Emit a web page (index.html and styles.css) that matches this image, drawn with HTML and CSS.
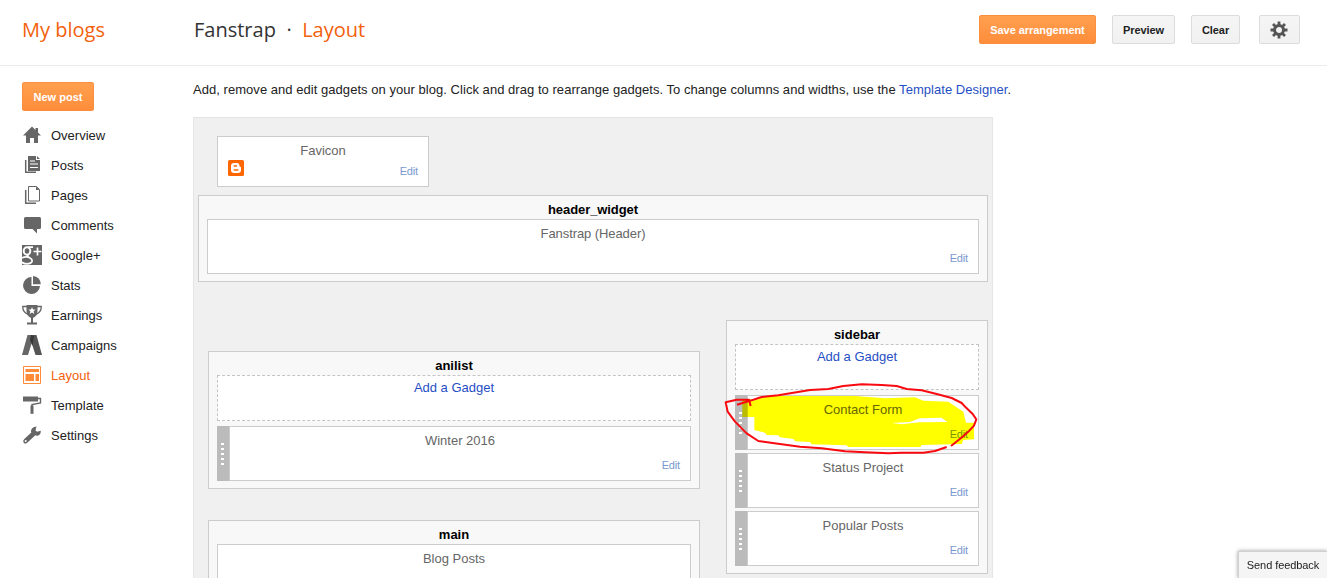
FILE: index.html
```html
<!DOCTYPE html>
<html lang="en">
<head>
<meta charset="utf-8">
<title>Fanstrap - Layout</title>
<link rel="stylesheet" href="styles.css">
</head>
<body>
<header class="topbar">
  <a class="brand">My blogs</a>
  <h1 class="crumbs"><span class="blog">Fanstrap</span><span class="dot">·</span><span class="page">Layout</span></h1>
  <div class="actions">
    <button class="btn primary save">Save arrangement</button>
    <button class="btn preview">Preview</button>
    <button class="btn clear">Clear</button>
    <button class="btn gear" aria-label="Options">
      <svg width="18" height="18" viewBox="0 0 18 18"><g stroke="#555" stroke-width="2.800"><path d="M9 .5v17M.5 9h17M3 3l12 12M15 3L3 15"/></g><circle cx="9" cy="9" r="4.500" fill="#f2f2f2" stroke="#555" stroke-width="3"/></svg>
    </button>
  </div>
</header>
<div class="columns">
  <nav class="side">
    <button class="btn primary newpost">New post</button>
    <ul class="menu">
      <li><svg class="ico" viewBox="0 0 20 20"><path d="M10 1.500L1 10.500h3V18h4v-5h4v5h4v-7.500h3l-3-3V3h-2.500v2z"/></svg><span>Overview</span></li>
      <li><svg class="ico" viewBox="0 0 20 20"><path d="M6 1h8v4h4v11H6zM15 1l3 3h-3z"/><path d="M3.700 5v12.300H14" fill="none" stroke="#666" stroke-width="1.500"/><path d="M8 6h5M8 9h8M8 12.500h8" fill="none" stroke="#fff" stroke-width="1.100"/></svg><span>Posts</span></li>
      <li><svg class="ico" viewBox="0 0 20 20"><path d="M6.500 1.500h8l3 3v11.500h-11z" fill="#fff" stroke="#666"/><path d="M14 1.500l3.500 3.500H14z"/><path d="M3.700 5v13.300H14" fill="none" stroke="#666" stroke-width="1.500"/></svg><span>Pages</span></li>
      <li><svg class="ico" viewBox="0 0 20 20"><path d="M3.500 2h14q1.500 0 1.500 1.500v9q0 1.500-1.500 1.500H15v4.500L10.500 14h-7Q2 14 2 12.500v-9Q2 2 3.500 2z"/></svg><span>Comments</span></li>
      <li><svg class="ico" viewBox="0 0 20 20"><path d="M0 0h20v20H0z"/><g fill="none" stroke="#fff"><ellipse cx="5" cy="6" rx="3.300" ry="3.800" stroke-width="2"/><path d="M6 2.200h5M5.500 10q0 2 2.500 3t2 3.500q-1 2.300-5 2.300T0 17m0-4q2-1.500 6-1" stroke-width="1.800"/><path d="M15.500 2.500v8M11.500 6.500h8" stroke-width="1.700"/></g></svg><span>Google+</span></li>
      <li><svg class="ico" viewBox="0 0 20 20"><path d="M9.500 2A8.500 8.500 0 1 0 18 11H9.500z"/><path d="M11 1a8 8 0 0 1 7.800 8.300H11z"/></svg><span>Stats</span></li>
      <li><svg class="ico" viewBox="0 0 20 20"><path d="M4.500 0h11v6q0 5-4.500 7v4.500h4V19.500h-10v-2H9V13Q4.500 11 4.500 6z"/><path d="M5 1.500H.7Q.7 8 7 9.500M15 1.500h4.300Q19.300 8 13 9.500" fill="none" stroke="#666" stroke-width="1.300"/><path d="M10 2l1 2.500 2.600.1-2 1.700.7 2.600L10 7.500 7.700 8.900l.7-2.600-2-1.700L9 4.500z" fill="#fff"/></svg><span>Earnings</span></li>
      <li><svg class="ico" viewBox="0 0 20 20"><path d="M5.500 0h5l.5 4-5 16H0z"/><path d="M9 0h5.500L20 20h-6.500L9 6z" fill="#555"/><path d="M9 0l3 1-1.500 10L8 5z" fill="#383838"/></svg><span>Campaigns</span></li>
      <li class="current"><svg class="ico" viewBox="0 0 20 20"><path d="M1.500 1.500h17v17h-17z" fill="none" stroke="#ff8b38"/><g fill="#ff8b38"><path d="M3.500 4H17v3H3.500zM3.500 9H12v7H3.500zM13.500 9H17v7h-3.500z"/></g></svg><span>Layout</span></li>
      <li><svg class="ico" viewBox="0 0 20 20"><path d="M1 1.500h15v5H1z"/><path d="M16 3.500h2.500V8L10 9.500V12" fill="none" stroke="#666" stroke-width="1.400"/><path d="M8.500 10.500h3v8.300h-3z"/></svg><span>Template</span></li>
      <li><svg class="ico" viewBox="0 0 20 20"><path d="M14.500 1.500l-1 3.800 1.500 1.500 3.800-1q.2 3.500-2.500 4.600-1.500.5-3-.1l-7.500 7q-2 2-4 .6-1.500-2 .5-3.800l7-6.500q-.7-2 .6-4Q12 1.500 14.500 1.500z"/><circle cx="3.700" cy="16" r="1" fill="#fff"/></svg><span>Settings</span></li>
    </ul>
  </nav>
  <main class="content">
    <p class="intro">Add, remove and edit gadgets on your blog. Click and drag to rearrange gadgets. To change columns and widths, use the <a>Template Designer</a>.</p>
    <div class="canvas">
      <div class="box favicon">
        <span class="title">Favicon</span>
        <svg class="blogger" width="16" height="16" viewBox="0 0 16 16"><rect width="16" height="16" rx="1.500" fill="#f60"/><path d="M6 3h3q2.500 0 2.500 3 0 .8.700.8.800 0 .8.700V10q0 3-3 3H6q-3 0-3-3V6q0-3 3-3z" fill="#fff"/><path d="M6.200 6h2.300M6.200 10h3.800" stroke="#f60" stroke-width="1.300" stroke-linecap="round"/></svg>
        <a class="edit">Edit</a>
      </div>
      <section class="section head">
        <h2>header_widget</h2>
        <div class="box"><span class="title">Fanstrap (Header)</span><a class="edit">Edit</a></div>
      </section>
      <div class="split">
        <div class="left">
          <section class="section">
            <h2>anilist</h2>
            <div class="add"><a>Add a Gadget</a></div>
            <div class="gadget"><i class="handle"><b></b></i><div class="box"><span class="title">Winter 2016</span><a class="edit">Edit</a></div></div>
          </section>
          <section class="section cut">
            <h2>main</h2>
            <div class="box"><span class="title">Blog Posts</span></div>
          </section>
        </div>
        <section class="section right">
          <h2>sidebar</h2>
          <div class="add"><a>Add a Gadget</a></div>
          <div class="gadget marked"><i class="handle"><b></b></i><div class="box"><span class="title">Contact Form</span><a class="edit">Edit</a></div>
            <svg class="marker" width="290" height="150" viewBox="0 0 870 450"><path fill="#ff0" d="M82 268H132V263L147 264V258H420L510 265 600 262 625 272 700 275 745 305 753 338H777V388L745 390 740 402 620 405 616 411H400L395 406 290 403 285 396 240 394 236 387 195 382 190 376 155 375 150 368 118 360V321H82z"/><path fill="#fff" d="M614 325L680 323 697 336 614 337 560 343 530 339 585 336z"/></svg>
            <svg class="pen" width="290" height="150" viewBox="0 0 870 450"><path d="M66 284L100 274 140 261 190 256 285 240 340 237 385 228 440 223 500 225 545 228 575 237 620 241 665 252 710 264 740 279 752 292 773 312 784 328 777 347 762 363 742 381 708 408M695 411L660 423 625 428H560L520 430 450 427 390 424 320 415 255 410 200 403 130 393 95 370 60 335 38 305 32 277 65 269H102L107 288" fill="none" stroke="#f80a10" stroke-width="6" stroke-linejoin="round"/></svg>
          </div>
          <div class="gadget"><i class="handle"><b></b></i><div class="box"><span class="title">Status Project</span><a class="edit">Edit</a></div></div>
          <div class="gadget"><i class="handle"><b></b></i><div class="box"><span class="title">Popular Posts</span><a class="edit">Edit</a></div></div>
        </section>
      </div>
    </div>
  </main>
</div>
<button class="feedback">Send feedback</button>
</body>
</html>
```
FILE: styles.css
```css
* { box-sizing: border-box; }
body { display: flex; flex-direction: column; height: 100vh; margin: 0; overflow: hidden; background: #fff; color: #222; font: 13px/16px "Liberation Sans", Arial, sans-serif; }
h1, h2, p, ul { margin: 0; padding: 0; }
a { color: #1f4fc4; }
.topbar { display: flex; flex: none; height: 66px; border-bottom: 1px solid #ebebeb; padding: 0 27px 0 22px; font: 20px/60px "Open Sans", sans-serif; }
.topbar .brand { width: 172px; color: #f3610d; }
.crumbs { flex: 1; font: inherit; color: #333; }
.dot { margin: 0 10.5px; }
.page { color: #f3610d; }
.actions { display: flex; padding-top: 15px; }
.btn { height: 29px; padding: 1px 0 0; border: 1px solid #dcdcdc; border-radius: 2px; background: linear-gradient(#f5f5f5, #f1f1f1); color: #222; font: bold 11px/26px "Liberation Sans", Arial, sans-serif; letter-spacing: -.06px; }
.primary { border-color: #fb8f3d; background: linear-gradient(#ffa04f, #ff8d3b); color: #fff; }
.save { width: 117px; margin-right: 16px; }
.preview { width: 63px; margin-right: 16px; }
.clear { width: 49px; margin-right: 19px; }
.gear { width: 41px; display: flex; align-items: center; justify-content: center; padding: 0 1px 0 0; }
.columns { display: flex; flex: 1; min-height: 0; }
.side { width: 193px; padding: 16px 0 0 22px; }
.newpost { width: 72px; display: block; padding: 0; letter-spacing: 0; }
.menu { list-style: none; margin-top: 9px; }
.menu li { display: flex; align-items: center; height: 30px; gap: 9px; }
.menu span { padding-top: 2px; }
.menu .current { color: #f3610d; }
.ico { width: 20px; height: 20px; fill: #666; }
.content { display: flex; flex-direction: column; min-height: 0; }
.intro { padding: 16px 0 19px; white-space: nowrap; letter-spacing: .041px; }
.canvas { display: flex; flex-direction: column; flex: 1; min-height: 0; width: 800px; padding: 18px 4px 0; border: 1px solid #e5e5e5; border-bottom: 0; background: #f0f0f0; }
.box { position: relative; height: 55px; border: 1px solid #ccc; background: #fff; text-align: center; padding-top: 6px; }
.title { display: block; color: #666; }
.edit { position: absolute; right: 10px; bottom: 8px; color: #7a99cf; font-size: 11px; line-height: 14px; letter-spacing: -.15px; }
.favicon { flex: none; width: 212px; height: 51px; margin: 0 0 8px 19px; }
.blogger { position: absolute; left: 10px; top: 23px; }
.section { padding: 6px 8px 7px; border: 1px solid #ccc; background: #f8f8f8; }
.head { flex: none; }
.head .title, .head h2 { letter-spacing: -.08px; }
.section h2 { height: 17px; color: #000; font-size: 13px; line-height: 16px; text-align: center; }
.split { display: flex; flex: 1; min-height: 0; justify-content: space-between; align-items: stretch; margin-top: 38px; padding-left: 10px; }
.left { width: 492px; display: flex; flex-direction: column; gap: 31px; padding-top: 31px; }
.cut { display: flex; flex-direction: column; flex: 1; padding-bottom: 0; border-bottom: 0; }
.cut .box { flex: 1; height: auto; border-bottom: 0; }
.right { width: 262px; align-self: flex-start; }
.add { height: 46px; margin-bottom: 5px; padding-top: 4px; border: 1px dashed #c4c4c4; background: #fff; text-align: center; }
.gadget { position: relative; display: flex; }
.gadget + .gadget { margin-top: 3px; }
.gadget .box { flex: 1; }
.handle { width: 12px; padding: 17px 0 0 4px; background: #bbb; }
.handle b { display: block; width: 3px; height: 22px; background: repeating-linear-gradient(#fff 0 2px, transparent 2px 5px); }
.marker, .pen { position: absolute; left: -20px; top: -85px; z-index: 2; pointer-events: none; }
.marker { mix-blend-mode: multiply; }
.marked::after { content: ""; }
.feedback { position: fixed; right: 0; bottom: 0; width: 89px; height: 27px; padding: 0; border: 1px solid #d0d0d0; border-width: 1px 0 0 1px; background: #f5f5f5; box-shadow: 0 0 4px rgba(0,0,0,.4); color: #222; font: 11px/26px "Liberation Sans", Arial, sans-serif; letter-spacing: -.08px; }
```
